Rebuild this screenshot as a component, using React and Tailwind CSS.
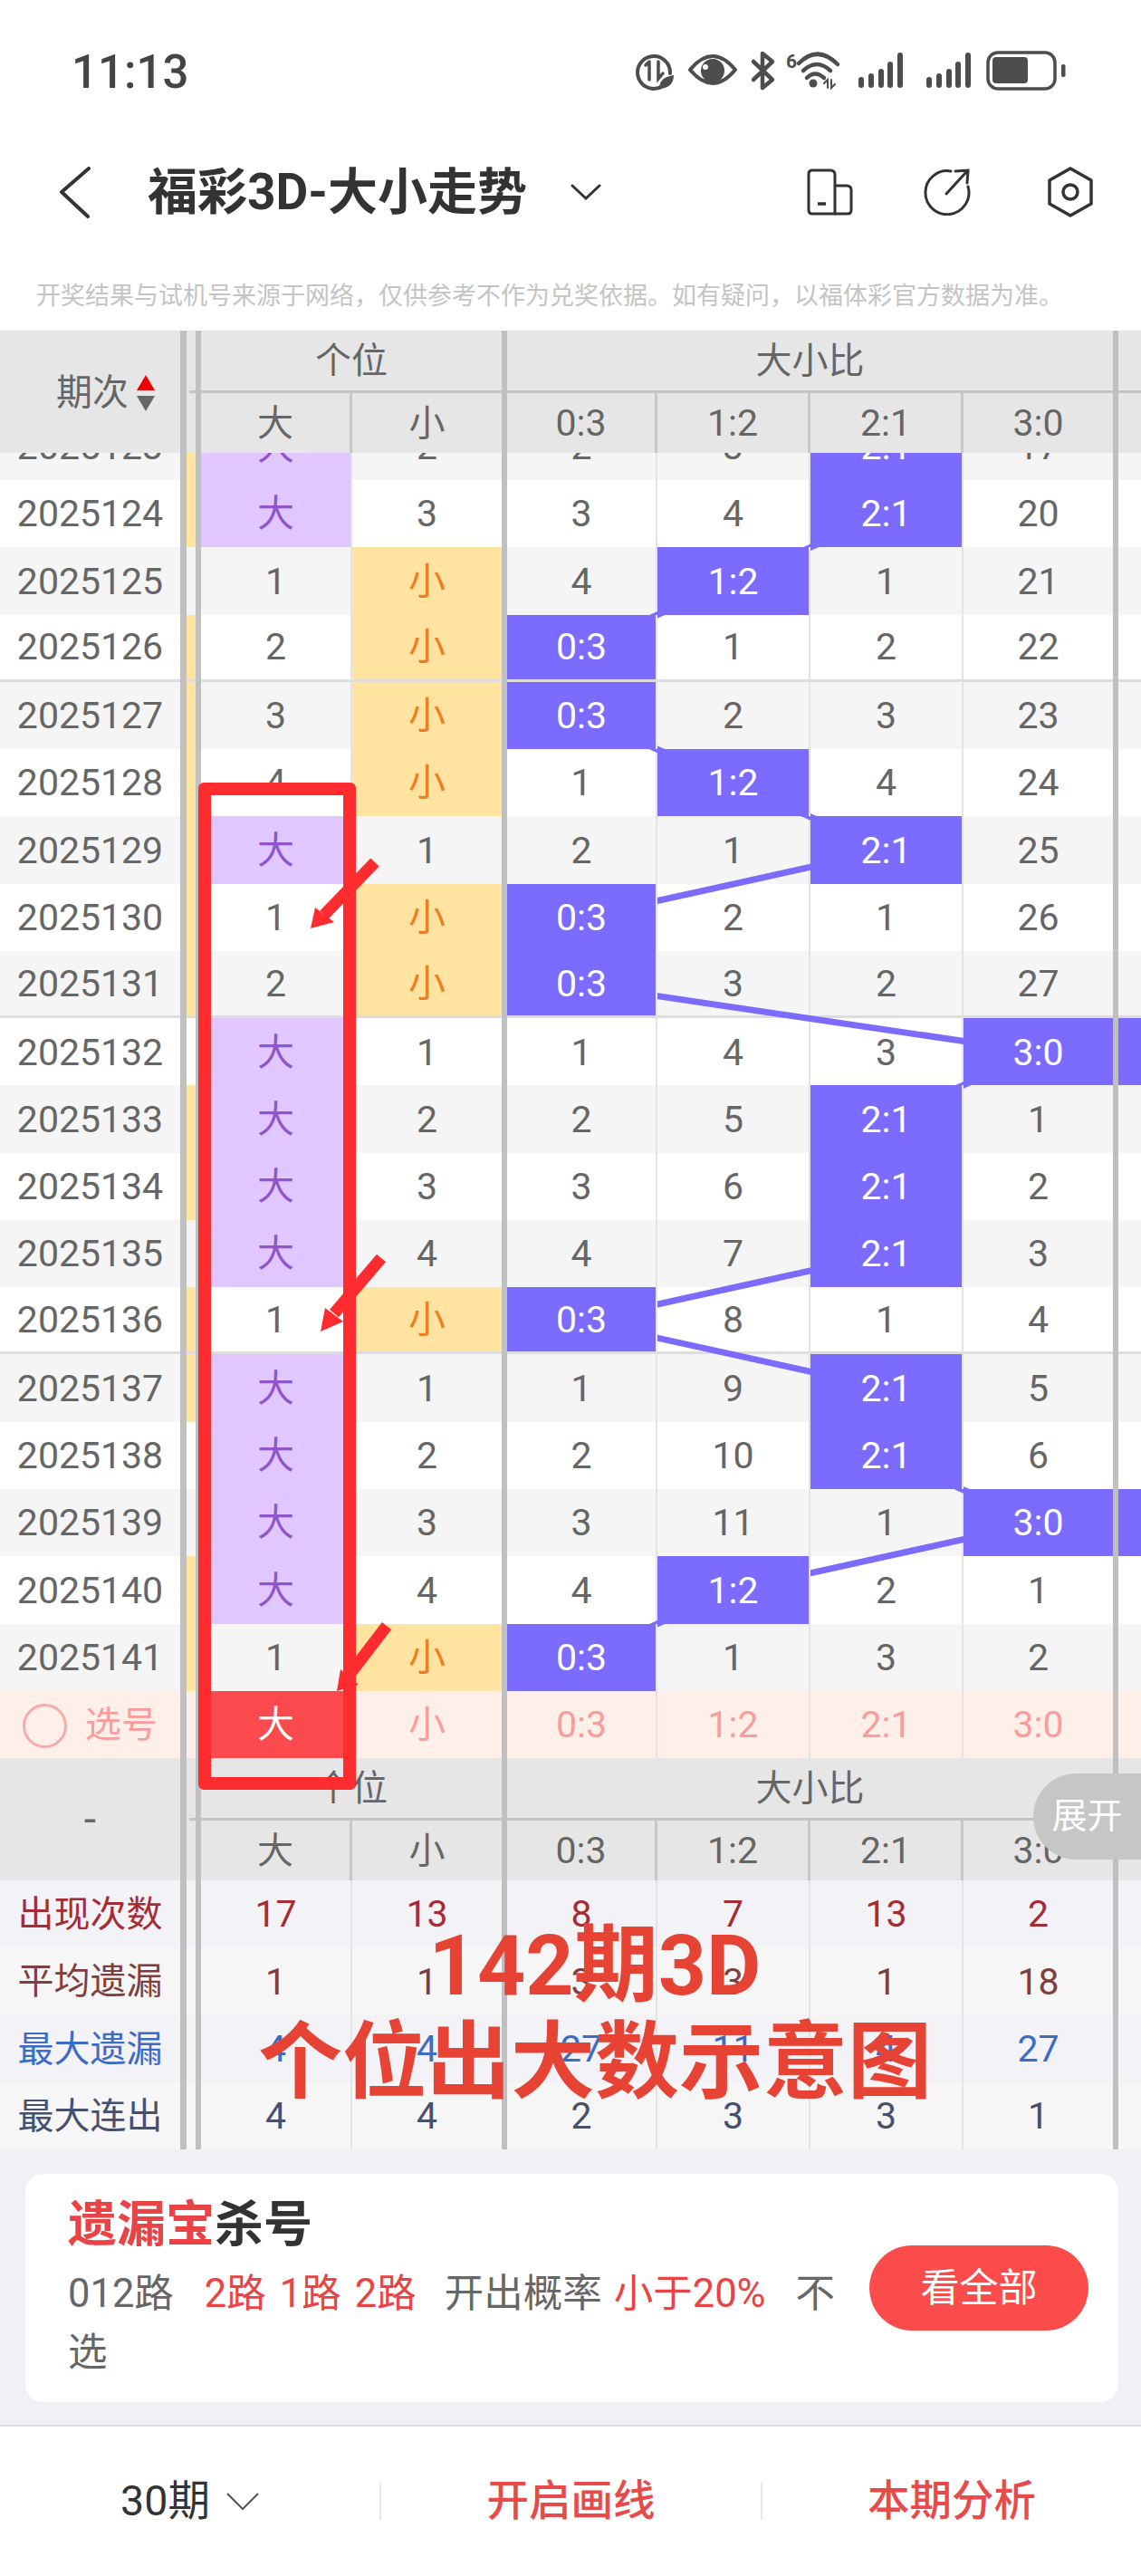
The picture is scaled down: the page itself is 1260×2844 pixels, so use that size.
import React from "react";

const fontStack = "font-['Roboto','Noto_Sans_CJK_SC',sans-serif]";

const rows = [
  ["2025123", "大", "2", "2", "3", "2:1", "17"],
  ["2025124", "大", "3", "3", "4", "2:1", "20"],
  ["2025125", "1", "小", "4", "1:2", "1", "21"],
  ["2025126", "2", "小", "0:3", "1", "2", "22"],
  ["2025127", "3", "小", "0:3", "2", "3", "23"],
  ["2025128", "4", "小", "1", "1:2", "4", "24"],
  ["2025129", "大", "1", "2", "1", "2:1", "25"],
  ["2025130", "1", "小", "0:3", "2", "1", "26"],
  ["2025131", "2", "小", "0:3", "3", "2", "27"],
  ["2025132", "大", "1", "1", "4", "3", "3:0"],
  ["2025133", "大", "2", "2", "5", "2:1", "1"],
  ["2025134", "大", "3", "3", "6", "2:1", "2"],
  ["2025135", "大", "4", "4", "7", "2:1", "3"],
  ["2025136", "1", "小", "0:3", "8", "1", "4"],
  ["2025137", "大", "1", "1", "9", "2:1", "5"],
  ["2025138", "大", "2", "2", "10", "2:1", "6"],
  ["2025139", "大", "3", "3", "11", "1", "3:0"],
  ["2025140", "大", "4", "4", "1:2", "2", "1"],
  ["2025141", "1", "小", "0:3", "1", "3", "2"],
];

// rows with the yellow strip next to the period column
const stripRows = [0, 1, 3, 4, 5, 6, 7, 8, 10, 11, 13, 14, 17, 18];
// the last row of each group of five has a separator
const sepRows = [3, 8, 13];

const stats = [
  { label: "出现次数", color: "text-[#a62b33]", bg: "bg-[#f2f2f7]", values: ["17", "13", "8", "7", "13", "2"] },
  { label: "平均遗漏", color: "text-[#7f3f40]", bg: "bg-[#f6f6f7]", values: ["1", "1", "3", "3", "1", "18"] },
  { label: "最大遗漏", color: "text-[#3c6cc6]", bg: "bg-[#f2f2f7]", values: ["4", "4", "27", "11", "4", "27"] },
  { label: "最大连出", color: "text-[#45516e]", bg: "bg-[#f6f6f7]", values: ["4", "4", "2", "3", "3", "1"] },
];

const colWidths = [
  "w-[167px] border-r-2",
  "w-[165px]",
  "w-[166px] border-r-2",
  "w-[169px] border-r-2",
  "w-[169px] border-r-2",
  "w-[165px]",
];

const ROW = 74.28;
const colCenters = [642, 810, 979, 1146];

const Bar = ({ wide }) => (
  <div className={`${wide ? "w-[7px]" : "w-[6px]"} shrink-0 bg-[#c0c0c0]`} />
);

const toneFor = (value) => {
  if (value === "大") return "bg-[#e1c7ff] text-[#9055cc]";
  if (value === "小") return "bg-[#ffe3a1] text-[#ee7e1f]";
  if (value.includes(":")) return "relative z-10 bg-[#7b6bff] text-white";
  return "text-[#666666]";
};

const Cell = ({ width, className, children }) => (
  <div className={`flex shrink-0 items-center justify-center border-r-[#e4e4e4] pt-[2px] ${width} ${className}`}>
    {children}
  </div>
);

const Columns = ({ values, toneClass }) => (
  <>
    <Cell width={colWidths[0]} className={toneClass(values[0])}>{values[0]}</Cell>
    <Cell width={colWidths[1]} className={toneClass(values[1])}>{values[1]}</Cell>
    <Bar />
    <Cell width={colWidths[2]} className={toneClass(values[2])}>{values[2]}</Cell>
    <Cell width={colWidths[3]} className={toneClass(values[3])}>{values[3]}</Cell>
    <Cell width={colWidths[4]} className={toneClass(values[4])}>{values[4]}</Cell>
    <Cell width={colWidths[5]} className={toneClass(values[5])}>{values[5]}</Cell>
    <Bar />
  </>
);

const DataRow = ({ row, index }) => {
  const bg = index % 2 === 0 ? "bg-[#f5f5f5]" : "bg-white";
  const sep = sepRows.includes(index) ? "border-b-[3px] border-b-[#dddddd]" : "";
  const toneClass = (v) => `${toneFor(v)} ${sep}`;
  const [label, ...values] = row;
  return (
    <div className={`flex h-[74.28px] ${bg} text-[41px]`}>
      <div className={`flex w-[199px] shrink-0 items-center justify-center pt-[2px] text-[#666666] ${sep}`}>{label}</div>
      <Bar wide />
      <div className={`w-[10px] shrink-0 ${stripRows.includes(index) ? "bg-[#ffe3a1]" : ""} ${sep}`} />
      <Bar />
      <Columns values={values} toneClass={toneClass} />
      <div className={`flex-1 ${values[5] === "3:0" ? "bg-[#7b6bff]" : ""} ${sep}`} />
    </div>
  );
};

const HeaderBand = ({ label }) => (
  <div className="flex h-[135px] bg-[#e6e6e6] text-[40px] text-[#666666]">
    {label}
    <Bar wide />
    <div className="flex w-[10px] shrink-0 flex-col">
      <div className="h-[66px]" />
      <div className="ml-[3px] h-[3px] bg-[#c4c4c4]" />
    </div>
    <Bar />
    <div className="flex w-[332px] shrink-0 flex-col">
      <div className="flex h-[66px] items-center justify-center pt-[2px]">个位</div>
      <div className="h-[3px] bg-[#c4c4c4]" />
      <div className="flex h-[66px] pt-0">
        <div className="flex w-[167px] items-center justify-center border-r-[3px] border-r-[#c8c8c8] pt-[2px]">大</div>
        <div className="flex w-[165px] items-center justify-center pt-[2px]">小</div>
      </div>
    </div>
    <Bar />
    <div className="flex w-[669px] shrink-0 flex-col">
      <div className="flex h-[66px] items-center justify-center pt-[2px]">大小比</div>
      <div className="h-[3px] bg-[#c4c4c4]" />
      <div className="flex h-[66px] text-[41px]">
        <div className="flex w-[166px] items-center justify-center border-r-[3px] border-r-[#c8c8c8] pt-[2px]">0:3</div>
        <div className="flex w-[169px] items-center justify-center border-r-[3px] border-r-[#c8c8c8] pt-[2px]">1:2</div>
        <div className="flex w-[169px] items-center justify-center border-r-[3px] border-r-[#c8c8c8] pt-[2px]">2:1</div>
        <div className="flex w-[165px] items-center justify-center pt-[2px]">3:0</div>
      </div>
    </div>
    <Bar />
    <div className="flex flex-1 flex-col">
      <div className="h-[66px]" />
      <div className="h-[3px] bg-[#c4c4c4]" />
    </div>
  </div>
);

const SortArrows = () => (
  <svg width="20" height="40" viewBox="0 0 20 40" className="ml-[9px]">
    <path d="M10 0 L20 17 L0 17 Z" fill="#f00000" />
    <path d="M0 23 L20 23 L10 40 Z" fill="#666666" />
  </svg>
);

const TrendLines = () => {
  const hits = rows.map((r) => r.slice(3).findIndex((v) => v.includes(":")));
  const points = hits
    .map((col, i) => `${colCenters[col]},${(i + 0.5) * ROW}`)
    .join(" ");
  return (
    <svg className="absolute left-0 top-0 z-[5] h-full w-full" viewBox={`0 0 1260 ${ROW * rows.length}`}>
      <polyline points={points} fill="none" stroke="#7b6bff" strokeWidth="7" />
    </svg>
  );
};

const StatusIcons = () => (
  <svg width="500" height="70" viewBox="0 0 500 70" className="mr-[70px] ml-auto" fill="none" stroke="#4d4d4d" strokeLinecap="round">
    {/* power saving */}
    <path d="M42 50 A18 18 0 1 1 50 36" strokeWidth="4" />
    <path d="M27 23 L27 43 M23 27 L27 23 M37 23 L37 42 L42 36" strokeWidth="3.5" />
    <path d="M38 53 Q38 40 54 38 Q54 52 38 53 Z" fill="#4d4d4d" stroke="none" />
    {/* eye */}
    <path d="M72 32 Q97 2 122 32 Q97 62 72 32 Z" strokeWidth="4" strokeLinejoin="round" />
    <circle cx="97" cy="33" r="13" fill="#4d4d4d" stroke="none" />
    <circle cx="89" cy="29" r="3" fill="#ffffff" stroke="none" />
    {/* bluetooth */}
    <path d="M142 23 L163 43 L152 52 L152 14 L163 23 L142 43" strokeWidth="4.5" strokeLinejoin="round" />
    {/* wifi */}
    <text x="178" y="30" fontSize="21" fontWeight="700" fill="#4d4d4d" stroke="none" fontFamily="Roboto">6</text>
    <path d="M192 25 Q213 4 235 26" strokeWidth="4.5" />
    <path d="M197 33 Q212 19 227 33" strokeWidth="4.5" />
    <path d="M201 41 Q210 32 220 41" strokeWidth="4.5" />
    <circle cx="208" cy="47" r="4.5" fill="#4d4d4d" stroke="none" />
    <path d="M220 47 L224 43 L224 52 M228 43 L228 52 L232 48" strokeWidth="2" />
    {/* signal */}
    <g strokeWidth="6">
      <path d="M261 49 L261 43 M272 49 L272 39 M283 49 L283 34 M293 49 L293 26 M304 49 L304 16" />
      <path d="M336 49 L336 43 M347 49 L347 39 M358 49 L358 34 M368 49 L368 26 M379 49 L379 16" />
    </g>
    {/* battery */}
    <rect x="401" y="13" width="74" height="40" rx="11" strokeWidth="3.5" />
    <rect x="406" y="18" width="39" height="29" rx="4" fill="#4d4d4d" stroke="none" />
    <rect x="482" y="26" width="4.5" height="14" rx="2" fill="#4d4d4d" stroke="none" />
  </svg>
);

const NavBar = () => (
  <div className="flex h-[104px] items-center pl-[66px]">
    <svg width="34" height="57" viewBox="0 0 34 57" fill="none" stroke="#333333" strokeWidth="4" strokeLinecap="round" strokeLinejoin="round">
      <path d="M32 2 L2 28 L31 55" />
    </svg>
    <h1 className="ml-[63px] text-[55px] font-bold leading-none text-[#333333]">福彩3D-大小走势</h1>
    <svg className="ml-[48px]" width="34" height="18" viewBox="0 0 34 18" fill="none" stroke="#333333" strokeWidth="3" strokeLinecap="round">
      <path d="M2 2 L17 16 L32 2" />
    </svg>
    <svg className="ml-auto" width="52" height="52" viewBox="0 0 52 52" fill="none" stroke="#333333" strokeWidth="3">
      <path d="M6 2 L26 2 Q31 2 31 7 L31 50 L6 50 Q2 50 2 46 L2 6 Q2 2 6 2 Z" />
      <path d="M31 19 L44 19 Q49 19 49 24 L49 46 Q49 50 45 50 L31 50" />
      <path d="M12 39 L21 39" strokeWidth="3.5" />
    </svg>
    <svg className="ml-[77px]" width="52" height="52" viewBox="0 0 52 52" fill="none" stroke="#333333" strokeWidth="3" strokeLinecap="round">
      <path d="M30 3 A24 24 0 1 0 49 20" />
      <path d="M25 28 L47 4 M35 3 L49 2 L48 16" />
    </svg>
    <svg className="ml-[84px] mr-[52px]" width="52" height="56" viewBox="0 0 52 56" fill="none" stroke="#333333" strokeWidth="3.5" strokeLinejoin="round">
      <path d="M26 2 L49 15 L49 41 L26 54 L3 41 L3 15 Z" />
      <circle cx="26" cy="28" r="8" />
    </svg>
  </div>
);

const Annotations = () => (
  <>
    <div className="absolute left-[219px] top-[864px] z-20 h-[1112px] w-[174px] rounded-[6px] border-[14px] border-[#fe2c2f]" />
    <svg className="absolute left-0 top-0 z-20" width="1260" height="2844" viewBox="0 0 1260 2844" fill="#fe2c2f" stroke="#fe2c2f">
      <g strokeWidth="13">
        <path d="M414 952 L358 1010" />
        <path d="M421 1389 L369 1450" />
        <path d="M427 1795 L385 1850" />
      </g>
      <g stroke="none">
        <path d="M343 1025 L348 1002 L369 1018 Z" />
        <path d="M354 1470 L359 1444 L379 1459 Z" />
        <path d="M372 1867 L376 1843 L396 1860 Z" />
      </g>
    </svg>
    <div className="absolute left-[257px] top-[2117px] z-20 w-[800px] whitespace-nowrap text-center text-[93px] font-bold leading-[107px] text-[#e74335]">
      <div>142期3D</div>
      <div>个位出大数示意图</div>
    </div>
    <div className="absolute left-[1141px] top-[1958px] z-20 flex h-[95px] w-[119px] items-center justify-center rounded-l-[48px] bg-[#c6c6c6] text-[39px] text-white">
      展开
    </div>
  </>
);

const App = () => {
  const pickTone = (v) =>
    v === "大" ? "bg-[#fa4a4d] text-white" : "text-[#fb9c9c]";

  return (
    <div className={`relative h-[2844px] w-[1260px] overflow-hidden bg-white ${fontStack}`}>
      {/* STATUS BAR */}
      <div className="flex h-[160px] items-center pl-[79px]">
        <span className="text-[51px] font-medium text-[#444444]">11:13</span>
        <StatusIcons />
      </div>

      <NavBar />

      <div className="h-[101px] pl-[40px] pt-[25px] text-[27px] leading-[76px] text-[#c4c4c4] whitespace-nowrap">
        开奖结果与试机号来源于网络，仅供参考不作为兑奖依据。如有疑问，以福体彩官方数据为准。
      </div>

      {/* TABLE */}
      <HeaderBand
        label={
          <div className="flex w-[199px] shrink-0 items-center pl-[62px] pt-[2px]">
            期次
            <SortArrows />
          </div>
        }
      />
      <div className="h-[1367px] overflow-hidden">
        <div className="relative mt-[-44.28px]">
          <TrendLines />
          {rows.map((row, i) => (
            <DataRow key={row[0]} row={row} index={i} />
          ))}
        </div>
      </div>

      {/* PICK ROW */}
      <div className="flex h-[74px] bg-[#ffefe9] text-[41px]">
        <div className="flex w-[199px] shrink-0 items-center justify-center gap-[20px] pt-[2px] text-[40px] text-[#fb9c9c]">
          <span className="h-[49px] w-[49px] rounded-full border-[3px] border-[#f9a9a9]" />
          选号
        </div>
        <Bar wide />
        <div className="w-[10px] shrink-0" />
        <Bar />
        <Columns values={["大", "小", "0:3", "1:2", "2:1", "3:0"]} toneClass={pickTone} />
        <div className="flex-1" />
      </div>

      <HeaderBand
        label={<div className="flex w-[199px] shrink-0 items-center justify-center text-[48px]">-</div>}
      />

      {/* STATS */}
      <div className="text-[41px]">
        {stats.map((s) => (
          <div key={s.label} className={`flex h-[74.25px] ${s.bg} ${s.color}`}>
            <div className="flex w-[199px] shrink-0 items-center justify-center pt-[2px] text-[40px]">{s.label}</div>
            <Bar wide />
            <div className="w-[10px] shrink-0" />
            <Bar />
            <Columns values={s.values} toneClass={() => ""} />
            <div className="flex-1" />
          </div>
        ))}
      </div>

      {/* KILL NUMBER CARD */}
      <div className="border-b-2 border-b-[#dddddd] bg-[#f0f0f5] px-[28px] pb-[25px] pt-[27px]">
        <div className="flex h-[252px] w-[1207px] items-center rounded-[20px] bg-white pl-[47px] pr-[33px]">
          <div className="w-[860px] self-start pt-[21px]">
            <div className="text-[54px] font-bold leading-[72px] text-[#333333]">
              <span className="text-[#ea4345]">遗漏宝</span>杀号
            </div>
            <p className="mt-[7px] text-[43.5px] leading-[65px] text-[#666666]">
              012路
              <span className="ml-[34px] text-[#ea4345]">2路</span>
              <span className="ml-[15px] text-[#ea4345]">1路</span>
              <span className="ml-[15px] text-[#ea4345]">2路</span>
              <span className="ml-[31px]">开出概率</span>
              <span className="ml-[13px] text-[#ea4345]">小于20%</span>
              <span className="ml-[33px]">不选</span>
            </p>
          </div>
          <button className="ml-auto flex h-[94px] w-[242px] items-center justify-center rounded-full bg-[#fb4b4b] text-[43px] text-white">
            看全部
          </button>
        </div>
      </div>

      {/* BOTTOM BAR */}
      <div className="flex h-[165px] items-center text-[46.5px]">
        <div className="flex h-[41px] w-[421px] items-center justify-center border-r-2 border-r-[#e8e8e8] text-[#333333]">
          30期
          <svg className="ml-[18px]" width="36" height="20" viewBox="0 0 36 20" fill="none" stroke="#555555" strokeWidth="2">
            <path d="M1 1 L18 18 L35 1" />
          </svg>
        </div>
        <div className="flex h-[41px] w-[421px] items-center justify-center border-r-2 border-r-[#e8e8e8] font-medium text-[#e84a4a]">
          开启画线
        </div>
        <div className="flex h-[41px] flex-1 items-center justify-center font-medium text-[#e84a4a]">本期分析</div>
      </div>

      <Annotations />
    </div>
  );
};

export default App;
